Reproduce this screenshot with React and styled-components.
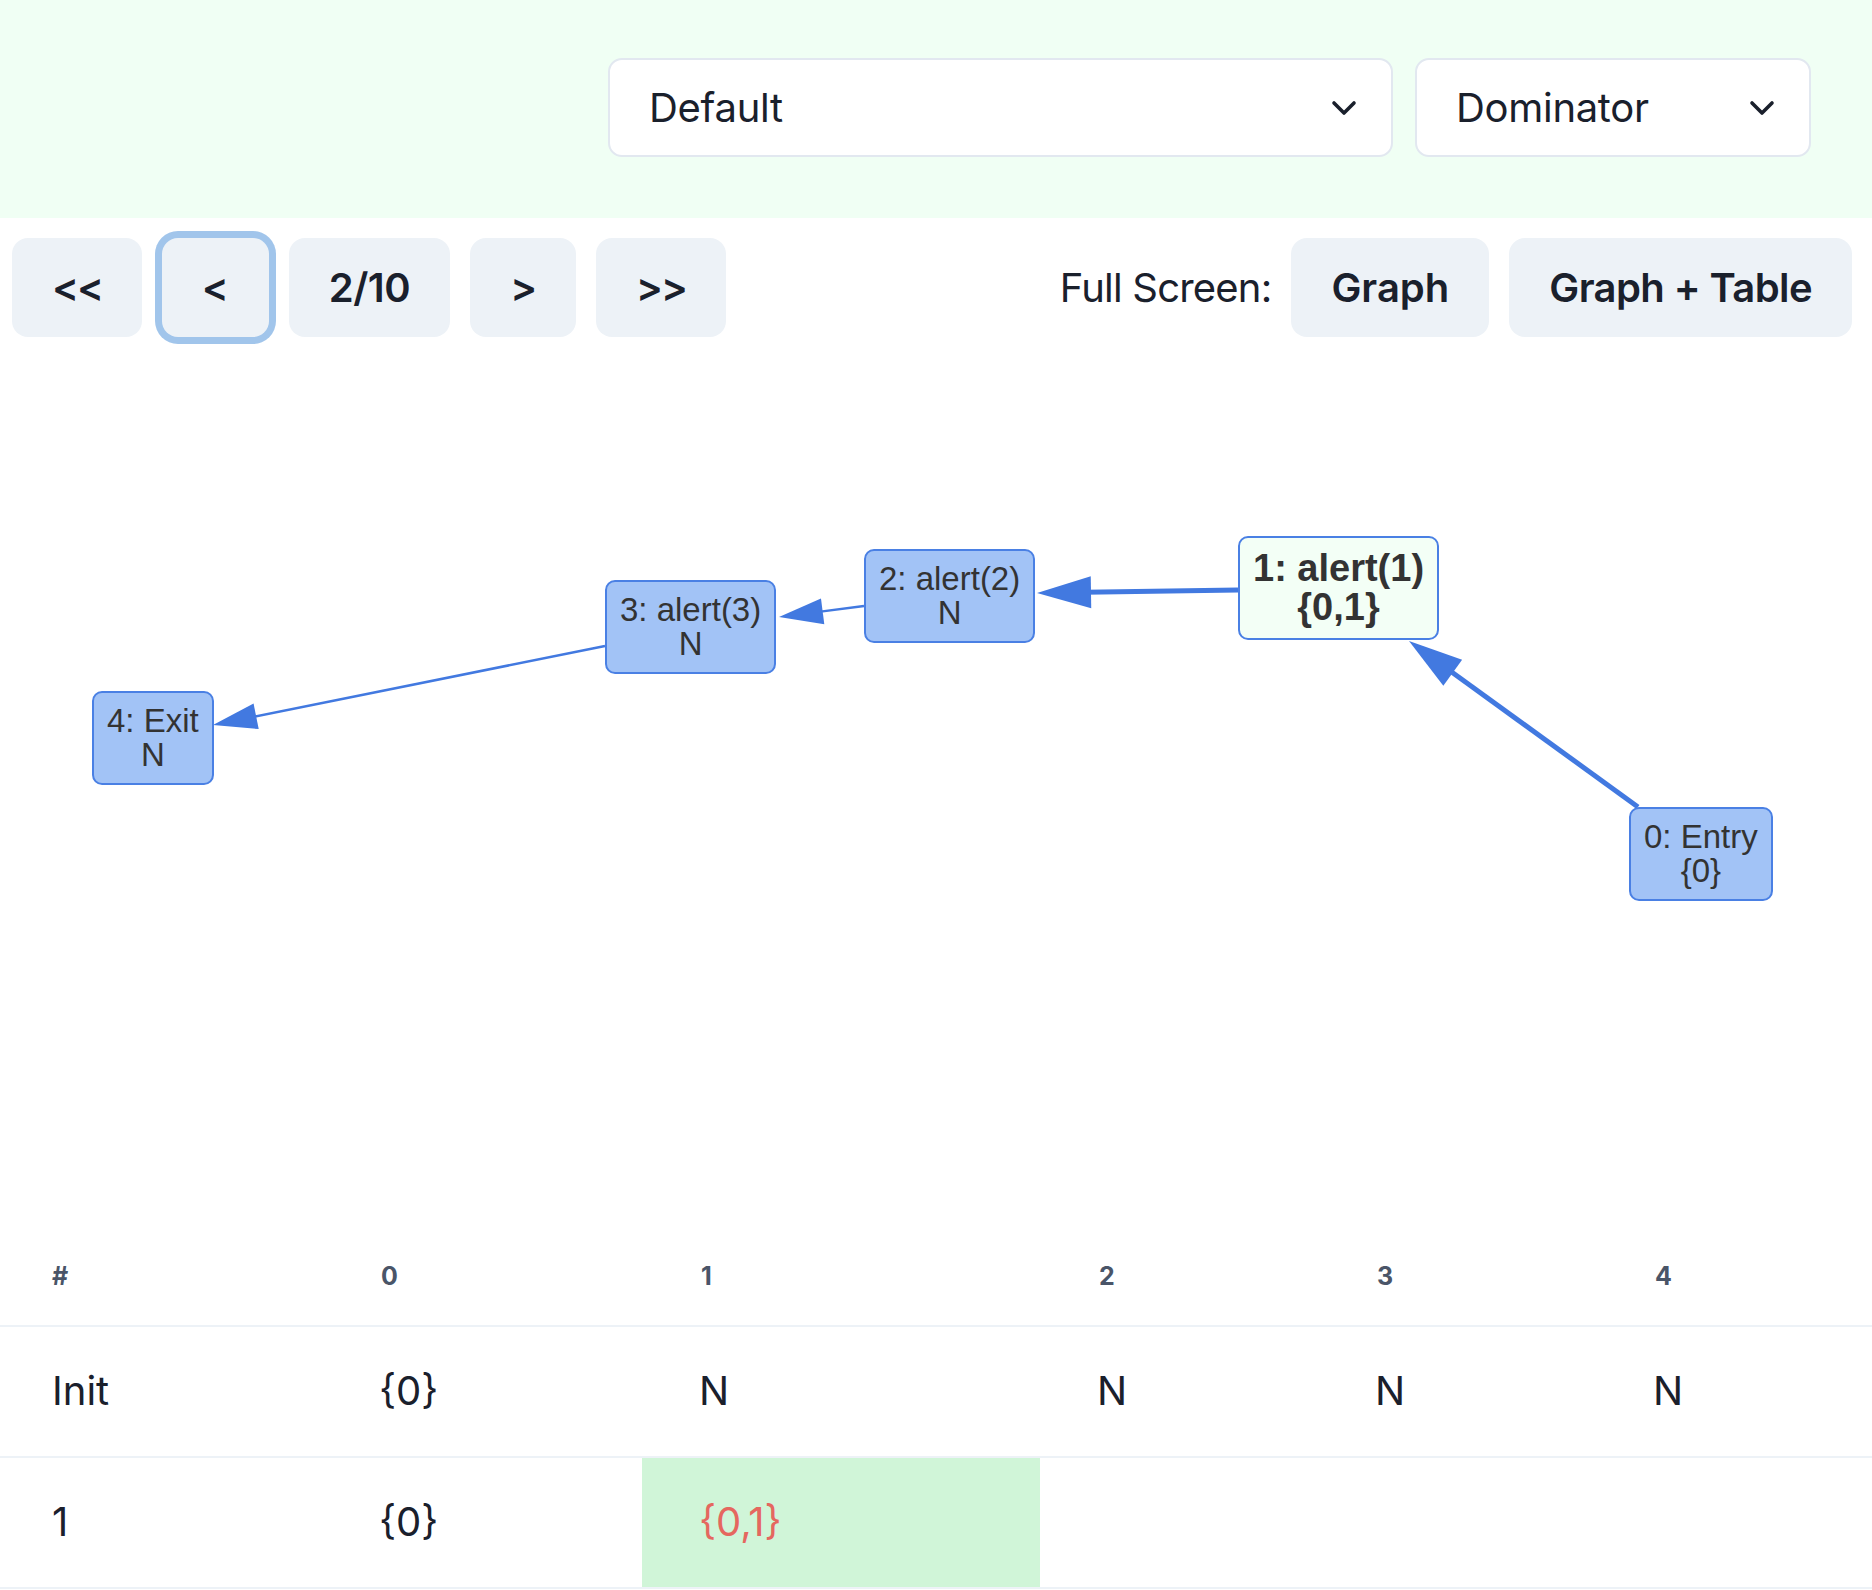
import React from 'react'
import styled, { createGlobalStyle } from 'styled-components'

const GlobalStyle = createGlobalStyle`
  body {
    margin: 0;
    background: #ffffff;
    font-family: Inter, "Noto Sans", sans-serif;
    color: #1a202c;
  }
`

const TopBar = styled.div`
  background: #f0fff4;
  height: 218px;
  box-sizing: border-box;
  display: flex;
  justify-content: flex-end;
  align-items: flex-start;
  gap: 22px;
  padding: 58px 61px 0 0;
`
const SelectBox = styled.div`
  width: ${(p) => p.$width}px;
  height: 99px;
  box-sizing: border-box;
  background: #ffffff;
  border: 2px solid #e2e8f0;
  border-radius: 14px;
  display: flex;
  align-items: center;
  justify-content: space-between;
  padding: 0 33px 0 39px;
  font-size: 40px;
  letter-spacing: -0.3px;
  color: #1a202c;
`
const Toolbar = styled.div`
  display: flex;
  justify-content: space-between;
  align-items: center;
  margin-top: 20px;
  padding: 0 20px 0 12px;
`
const Group = styled.div`
  display: flex;
  align-items: center;
  gap: 20px;
`
const NavButton = styled.button`
  height: 99px;
  padding: 0 40px;
  border: none;
  border-radius: 16px;
  background: #edf2f7;
  font-family: Inter, "Noto Sans", sans-serif;
  font-size: 40px;
  font-weight: 600;
  letter-spacing: ${(p) => p.$spacing || 0}px;
  color: #1a202c;
  box-shadow: ${(p) => (p.$focused ? '0 0 0 7px #a1c5eb' : 'none')};
`
const Label = styled.span`
  font-size: 40px;
  letter-spacing: -0.8px;
  color: #1a202c;
`
const Canvas = styled.div`
  position: relative;
  height: 891px;
`
const EdgeLayer = styled.svg`
  position: absolute;
  left: 0;
  top: 0;
`
const Node = styled.div`
  position: absolute;
  left: ${(p) => p.$x}px;
  top: ${(p) => p.$y}px;
  box-sizing: border-box;
  border: 2px solid #4a80e4;
  border-radius: 10px;
  background: ${(p) => (p.$active ? '#f3fff6' : '#a2c3f6')};
  color: #333333;
  font-family: "Liberation Sans", Arial, sans-serif;
  font-size: ${(p) => (p.$active ? 38 : 33)}px;
  font-weight: ${(p) => (p.$active ? 700 : 400)};
  line-height: ${(p) => (p.$active ? 39 : 34)}px;
  padding: ${(p) => (p.$active ? '11px 13px' : '11px 13px')};
  text-align: center;
  white-space: nowrap;
`
const Table = styled.table`
  width: 100%;
  border-collapse: collapse;
  table-layout: fixed;
`
const Th = styled.th`
  text-align: left;
  font-size: 25px;
  line-height: 32px;
  font-weight: 700;
  letter-spacing: 0.05em;
  color: #4a5568;
  padding: 32px 0 33px 59px;
  border-bottom: 2px solid #edf2f7;
  &:first-child {
    padding-left: 52px;
  }
`
const Td = styled.td`
  font-size: 40px;
  line-height: 60px;
  padding: 34px 0 35px 57px;
  border-bottom: 2px solid #edf2f7;
  color: ${(p) => (p.$changed ? '#e5675f' : '#1a202c')};
  background: ${(p) => (p.$changed ? '#d0f5d8' : 'transparent')};
  &:first-child {
    padding-left: 52px;
  }
`

const Chevron = () => (
  <svg width="28" height="18" viewBox="0 0 28 18">
    <polyline
      points="4,4 14,14 24,4"
      fill="none"
      stroke="#1a202c"
      strokeWidth="3.6"
      strokeLinecap="round"
      strokeLinejoin="round"
    />
  </svg>
)

const nodes = [
  { id: 4, x: 92, y: 354, lines: ['4: Exit', 'N'] },
  { id: 3, x: 605, y: 243, lines: ['3: alert(3)', 'N'] },
  { id: 2, x: 864, y: 212, lines: ['2: alert(2)', 'N'] },
  { id: 1, x: 1238, y: 199, lines: ['1: alert(1)', '{0,1}'], active: true },
  { id: 0, x: 1629, y: 470, lines: ['0: Entry', '{0}'] },
]

const edges = [
  { from: [1638, 470], to: [1409, 304], thick: true },
  { from: [1238, 253], to: [1037, 256], thick: true },
  { from: [864, 269], to: [779, 280] },
  { from: [605, 309], to: [213, 388] },
]

function Edge({ from, to, thick }) {
  const [x1, y1] = from
  const [x2, y2] = to
  const dx = x2 - x1
  const dy = y2 - y1
  const d = Math.hypot(dx, dy)
  const ux = dx / d
  const uy = dy / d
  const len = thick ? 54 : 44
  const half = thick ? 16 : 13
  const bx = x2 - ux * len
  const by = y2 - uy * len
  const pts = [
    [x2, y2],
    [bx - uy * half, by + ux * half],
    [bx + uy * half, by - ux * half],
  ]
  return (
    <g>
      <line
        x1={x1}
        y1={y1}
        x2={bx + ux * 6}
        y2={by + uy * 6}
        stroke="#4279e0"
        strokeWidth={thick ? 5 : 2.5}
      />
      <polygon points={pts.map((p) => p.join(',')).join(' ')} fill="#4279e0" />
    </g>
  )
}

const columns = ['#', '0', '1', '2', '3', '4']
const colWidths = [322, 320, 398, 278, 278, 276]
const rows = [
  ['Init', '{0}', 'N', 'N', 'N', 'N'],
  ['1', '{0}', '{0,1}', '', '', ''],
]

export default function App() {
  return (
    <>
      <GlobalStyle />
      <TopBar>
        <SelectBox $width={785}>
          <span>Default</span>
          <Chevron />
        </SelectBox>
        <SelectBox $width={396}>
          <span>Dominator</span>
          <Chevron />
        </SelectBox>
      </TopBar>
      <Toolbar>
        <Group>
          <NavButton $spacing={-2}>&lt;&lt;</NavButton>
          <NavButton $focused>&lt;</NavButton>
          <NavButton $spacing={-0.5}>2/10</NavButton>
          <NavButton $spacing={-1}>&gt;</NavButton>
          <NavButton $spacing={-2}>&gt;&gt;</NavButton>
        </Group>
        <Group>
          <Label>Full Screen:</Label>
          <NavButton>Graph</NavButton>
          <NavButton $spacing={-0.6}>Graph + Table</NavButton>
        </Group>
      </Toolbar>
      <Canvas>
        <EdgeLayer width="1872" height="891">
          {edges.map((e, i) => (
            <Edge key={i} {...e} />
          ))}
        </EdgeLayer>
        {nodes.map((n) => (
          <Node key={n.id} $x={n.x} $y={n.y} $active={n.active}>
            {n.lines[0]}
            <br />
            {n.lines[1]}
          </Node>
        ))}
      </Canvas>
      <Table>
        <colgroup>
          {colWidths.map((w, i) => (
            <col key={i} style={{ width: w }} />
          ))}
        </colgroup>
        <thead>
          <tr>
            {columns.map((c) => (
              <Th key={c}>{c}</Th>
            ))}
          </tr>
        </thead>
        <tbody>
          {rows.map((r, i) => (
            <tr key={i}>
              {r.map((cell, j) => (
                <Td key={j} $changed={i === 1 && j === 2}>
                  {cell}
                </Td>
              ))}
            </tr>
          ))}
        </tbody>
      </Table>
    </>
  )
}
